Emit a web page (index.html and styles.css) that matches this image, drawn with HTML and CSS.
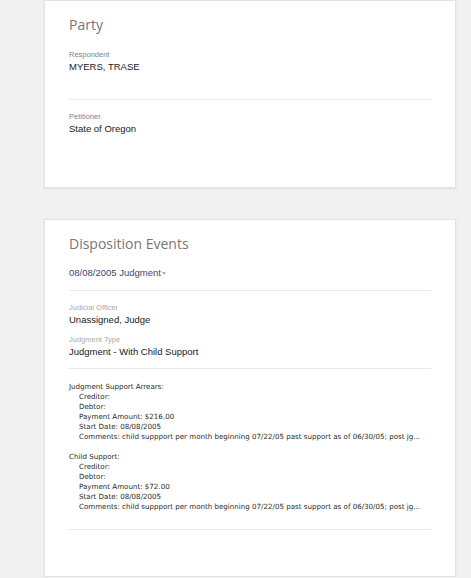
FILE: index.html
```html
<!DOCTYPE html>
<html>
<head>
<meta charset="utf-8">
<link rel="stylesheet" href="styles.css">
</head>
<body>
<div class="page">
  <section class="card card-party">
    <h2 class="card-title">Party</h2>
    <div class="field field-first">
      <div class="label label-party">Respondent</div>
      <div class="value">MYERS, TRASE</div>
    </div>
    <hr class="rule rule-party">
    <div class="field field-pet">
      <div class="label label-party">Petitioner</div>
      <div class="value">State of Oregon</div>
    </div>
  </section>

  <section class="card card-events">
    <h2 class="card-title">Disposition Events</h2>
    <div class="event-toggle">08/08/2005 Judgment<span class="caret"></span></div>
    <hr class="rule rule-toggle">
    <div class="field field-officer">
      <div class="label label-muted">Judicial Officer</div>
      <div class="value">Unassigned, Judge</div>
    </div>
    <div class="field field-type">
      <div class="label label-muted">Judgment Type</div>
      <div class="value">Judgment - With Child Support</div>
    </div>
    <hr class="rule rule-fields">
    <div class="details">
      <div class="group">
        <div class="group-title">Judgment Support Arrears:</div>
        <div class="item">Creditor:</div>
        <div class="item">Debtor:</div>
        <div class="item">Payment Amount: $216.00</div>
        <div class="item">Start Date: 08/08/2005</div>
        <div class="item">Comments: child suppport per month beginning 07/22/05 past support as of 06/30/05; post jg...</div>
      </div>
      <div class="group">
        <div class="group-title">Child Support:</div>
        <div class="item">Creditor:</div>
        <div class="item">Debtor:</div>
        <div class="item">Payment Amount: $72.00</div>
        <div class="item">Start Date: 08/08/2005</div>
        <div class="item">Comments: child suppport per month beginning 07/22/05 past support as of 06/30/05; post jg...</div>
      </div>
    </div>
    <hr class="rule rule-end">
  </section>
</div>
</body>
</html>
```

FILE: styles.css
```css
html, body {
  margin: 0;
  padding: 0;
  background: #f1f1f1;
}

.page {
  width: 412px;
  margin-left: 44px;
  display: flex;
  flex-direction: column;
  gap: 31px;
}

.card {
  background: #fff;
  border: 1px solid #e2e2e2;
  box-shadow: 0 1px 2px rgba(0, 0, 0, 0.08);
  padding: 16px 24px 0 24px;
  display: flow-root;
}

.card-party {
  height: 170px;
}

.card-events {
  height: 340px;
}

.card-title {
  margin: 0;
  font-family: "Open Sans", sans-serif;
  font-weight: 400;
  font-size: 14px;
  line-height: 16px;
  color: #777;
}

.label {
  font-family: "Liberation Sans", Arial, sans-serif;
  font-size: 7.5px;
  line-height: 10px;
}

.label-party {
  color: #7b80a3;
}

.label-muted {
  color: #ababab;
}

.value {
  font-family: "Liberation Sans", Arial, sans-serif;
  font-size: 9.5px;
  line-height: 13px;
  color: #1a1a1a;
}

.field-first {
  margin-top: 17px;
}

.rule {
  border: 0;
  height: 1px;
  background: #e8e8e8;
  margin: 0;
}

.rule-party {
  margin-top: 26px;
}

.field-pet {
  margin-top: 12px;
}

.event-toggle {
  margin-top: 14px;
  font-family: "Liberation Sans", Arial, sans-serif;
  font-size: 9.5px;
  line-height: 13px;
  color: #3c4675;
}

.caret {
  display: inline-block;
  width: 0;
  height: 0;
  margin-left: 1px;
  vertical-align: 1px;
  border-left: 2.5px solid transparent;
  border-right: 2.5px solid transparent;
  border-top: 3px solid #a9a9b4;
}

.rule-toggle {
  margin-top: 11px;
}

.field-officer {
  margin-top: 12px;
}

.field-type {
  margin-top: 9px;
}

.rule-fields {
  margin-top: 10px;
}

.details {
  margin-top: 13px;
  display: flex;
  flex-direction: column;
  gap: 10px;
  font-family: "DejaVu Sans", Verdana, sans-serif;
  font-size: 7.1px;
  line-height: 10px;
  color: #2a2a2a;
}

.item {
  padding-left: 10px;
  white-space: nowrap;
}

.rule-end {
  margin-top: 17px;
}
```
